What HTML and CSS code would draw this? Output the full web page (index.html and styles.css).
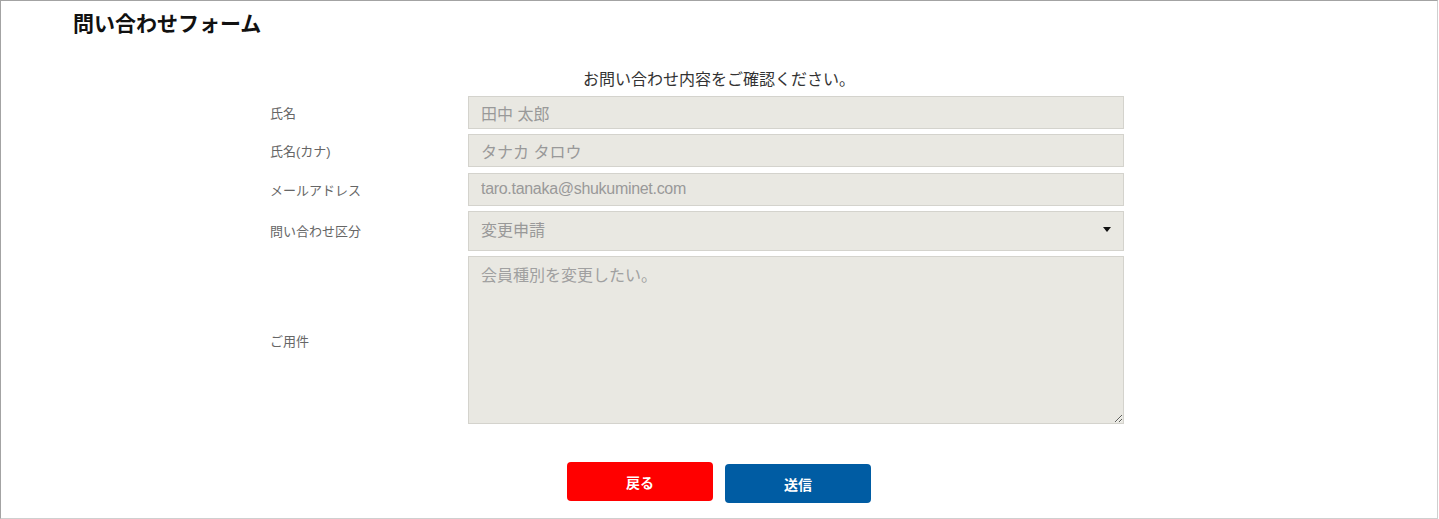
FILE: index.html
```html
<!DOCTYPE html>
<html lang="ja">
<head>
    <meta charset="UTF-8">
    <meta name="viewport" content="width=device-width, initial-scale=1.0">
    <title>問い合わせフォーム</title>
    <link rel="stylesheet" href="styles.css">
</head>
<body>
    <div class="frame">
        <h1 class="title">問い合わせフォーム</h1>
        <p class="lead">お問い合わせ内容をご確認ください。</p>
        <form class="form">
            <label class="label">氏名</label>
            <input class="field" type="text" value="田中 太郎" readonly>

            <label class="label">氏名(カナ)</label>
            <input class="field" type="text" value="タナカ タロウ" readonly>

            <label class="label">メールアドレス</label>
            <input class="field field-mail" type="text" value="taro.tanaka@shukuminet.com" readonly>

            <label class="label">問い合わせ区分</label>
            <div class="select-wrap">
                <select class="field field-select">
                    <option>変更申請</option>
                </select>
            </div>

            <label class="label">ご用件</label>
            <textarea class="field field-area" placeholder="会員種別を変更したい。"></textarea>
        </form>
        <div class="buttons">
            <button type="button" class="btn btn-back">戻る</button>
            <button type="button" class="btn btn-send">送信</button>
        </div>
    </div>
</body>
</html>
```

FILE: styles.css
```css
html{
    height: 100%;
}
body{
    margin: 0;
    height: 100%;
    background: #fff;
    font-family: "Liberation Sans", "Noto Sans CJK JP", sans-serif;
    color: #333;
}
.frame{
    width: 1438px;
    height: 519px;
    box-sizing: border-box;
    border: 1px solid #a3a3a3;
    border-right-color: #cfcfcf;
    border-bottom-color: #cfcfcf;
    overflow: hidden;
}
.title{
    margin: 0;
    padding: 11px 0 0 72px;
    font-size: 21px;
    line-height: 24px;
    font-weight: 700;
    color: #111;
}
.lead{
    margin: 34px 0 0;
    text-align: center;
    font-size: 16px;
    line-height: 20px;
    color: #333;
}
.form{
    width: 900px;
    margin: 6px auto 0;
    padding-left: 1px;
    box-sizing: border-box;
    display: grid;
    grid-template-columns: 198px 656px;
    row-gap: 5.34px;
    align-items: center;
}
.label{
    font-size: 13px;
    color: #666;
}
.field{
    box-sizing: border-box;
    width: 656px;
    height: 33px;
    margin: 0;
    padding: 0 12px;
    border: 1px solid #d4d3cd;
    background: #e9e8e2;
    font-family: "Liberation Sans", "Noto Sans CJK JP", sans-serif;
    font-size: 16px;
    color: #999;
    outline: none;
    border-radius: 0;
}
.field-mail{
    letter-spacing: -0.3px;
}
.select-wrap{
    position: relative;
}
.select-wrap::after{
    content: "";
    position: absolute;
    right: 13px;
    top: 16px;
    border-left: 4px solid transparent;
    border-right: 4px solid transparent;
    border-top: 5px solid #111;
    pointer-events: none;
}
.field-select{
    height: 40px;
    -webkit-appearance: none;
    appearance: none;
    display: block;
}
.field-area{
    display: block;
    height: 168px;
    padding: 5px 12px;
    resize: vertical;
}
.field-area::placeholder{
    color: #a0a0a0;
}
.buttons{
    display: flex;
    justify-content: center;
    align-items: flex-start;
    gap: 12px;
    margin-top: 38px;
}
.btn{
    width: 146px;
    height: 39px;
    border: 0;
    border-radius: 4px;
    color: #fff;
    font-family: "Liberation Sans", "Noto Sans CJK JP", sans-serif;
    font-size: 14px;
    font-weight: 700;
    cursor: pointer;
}
.btn-back{
    background: #ff0000;
}
.btn-send{
    margin-top: 2px;
    background: #005ca3;
}
```
